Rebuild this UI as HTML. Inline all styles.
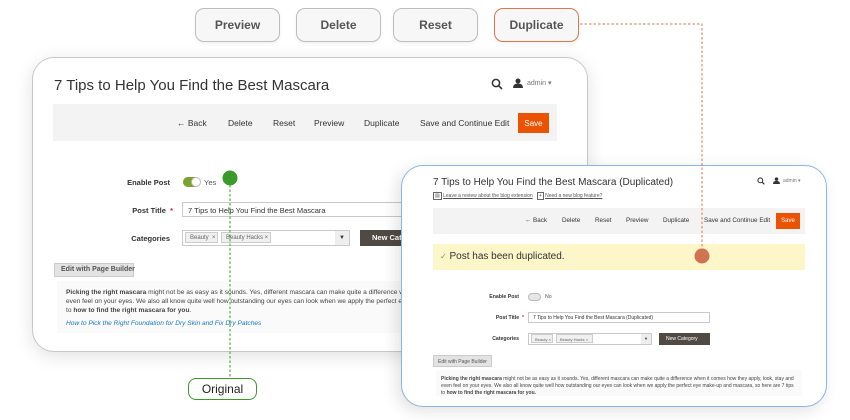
<!DOCTYPE html>
<html><head><meta charset="utf-8"><style>
*{box-sizing:border-box;margin:0;padding:0;white-space:nowrap}
body{width:850px;height:420px;background:#fff;position:relative;overflow:hidden;font-family:"Liberation Sans",sans-serif;color:#333}
.a{position:absolute}
.tb{position:absolute;height:34px;width:85px;border:1px solid #bdbdbd;border-radius:9px;background:#f7f7f7;font-size:12px;font-weight:bold;color:#555;display:flex;align-items:center;justify-content:center;box-shadow:0 2px 4px rgba(0,0,0,.06)}
.card{position:absolute;background:#fff;border-radius:22px}
.bar{position:absolute;background:#f3f3f3}
.lbl{position:absolute;font-weight:bold;color:#333;text-align:right}
.inp{position:absolute;border:1px solid #c9c9c9;background:#fff;color:#333;overflow:hidden}
.tag{position:absolute;border:1px solid #ccc;background:#f0f0f0;color:#666;overflow:hidden}
</style></head><body>

<div class="tb" style="left:195px;top:8px">Preview</div>
<div class="tb" style="left:296px;top:8px">Delete</div>
<div class="tb" style="left:393px;top:8px">Reset</div>
<div class="tb" style="left:494px;top:8px;border-color:#d9774f">Duplicate</div>

<!-- left card -->
<div class="card" style="left:32px;top:57px;width:556px;height:295px;border:1px solid #c8c8c8;box-shadow:0 4px 18px rgba(0,0,0,.12)"></div>
<div class="a" style="left:54px;top:77px;font-size:15px;color:#333">7 Tips to Help You Find the Best Mascara</div>
<svg class="a" style="left:491px;top:78px" width="12" height="12" viewBox="0 0 12 12"><circle cx="5" cy="5" r="3.6" fill="none" stroke="#333" stroke-width="1.5"/><path d="M7.6 7.6L11 11" stroke="#333" stroke-width="1.6"/></svg>
<svg class="a" style="left:513px;top:78px" width="10" height="10" viewBox="0 0 10 10"><circle cx="5" cy="3" r="2.5" fill="#333"/><path d="M0 10Q0 5.5 5 5.5Q10 5.5 10 10Z" fill="#333"/></svg>
<div class="a" style="left:527px;top:79px;font-size:7px;color:#777">admin ▾</div>
<div class="bar" style="left:53px;top:104px;width:504px;height:37px"></div>
<div class="a" style="left:177px;top:118px;font-size:8.5px">← Back</div>
<div class="a" style="left:228px;top:118px;font-size:8.5px">Delete</div>
<div class="a" style="left:273px;top:118px;font-size:8.5px">Reset</div>
<div class="a" style="left:314px;top:118px;font-size:8.5px">Preview</div>
<div class="a" style="left:364px;top:118px;font-size:8.5px">Duplicate</div>
<div class="a" style="left:420px;top:118px;font-size:8.5px">Save and Continue Edit</div>
<div class="a" style="left:518px;top:113px;width:31px;height:20px;background:#eb5202;color:#fff;font-size:8px;display:flex;align-items:center;justify-content:center">Save</div>

<div class="lbl" style="left:100px;top:178px;width:70px;font-size:7.5px">Enable Post</div>
<div class="a" style="left:183px;top:177px;width:17px;height:10px;border-radius:5px;background:#79a22e"></div>
<div class="a" style="left:191px;top:177px;width:10px;height:10px;border-radius:5px;background:#fff;border:1px solid #bbb"></div>
<div class="a" style="left:204px;top:178px;font-size:7.5px;color:#555">Yes</div>
<div class="lbl" style="left:100px;top:206px;width:73px;font-size:7.5px">Post Title <span style="color:#e22626">&nbsp;*</span></div>
<div class="inp" style="left:182px;top:202px;width:230px;height:15px;font-size:7.5px;padding:3px 5px">7 Tips to Help You Find the Best Mascara</div>
<div class="lbl" style="left:100px;top:234px;width:70px;font-size:7.5px">Categories</div>
<div class="inp" style="left:182px;top:230px;width:168px;height:16px"></div>
<div class="tag" style="left:185px;top:232px;width:33px;height:11px;font-size:6px;padding:2px 4px">Beauty &nbsp;×</div>
<div class="tag" style="left:221px;top:232px;width:50px;height:11px;font-size:6px;padding:2px 4px">Beauty Hacks ×</div>
<div class="a" style="left:335px;top:231px;width:14px;height:14px;background:#eee;font-size:6px;text-align:center;line-height:14px">▼</div>
<div class="a" style="left:360px;top:230px;width:60px;height:16px;background:#514943;color:#fff;font-size:7.5px;font-weight:bold;padding:3px 12px">New Category</div>
<div class="a" style="left:54px;top:263px;width:80px;height:14px;background:#e3e3e3;border:1px solid #ccc;font-size:7px;font-weight:bold;color:#555;padding:2px 6px">Edit with Page Builder</div>
<div class="a" style="left:57px;top:281px;width:350px;height:52px;background:#fafafa"></div>
<div class="a" style="left:66px;top:288px;width:340px;font-size:6.6px;line-height:9px;color:#444;overflow:hidden"><b>Picking the right mascara</b> might not be as easy as it sounds. Yes, different mascara can make quite a difference when<br>even feel on your eyes. We also all know quite well how outstanding our eyes can look when we apply the perfect eye<br>to <b>how to find the right mascara for you</b>.</div>
<div class="a" style="left:66px;top:320px;font-size:6.6px;font-style:italic;color:#1979c3">How to Pick the Right Foundation for Dry Skin and Fix Dry Patches</div>

<!-- right card -->
<div class="card" style="left:401px;top:165px;width:426px;height:242px;border:1px solid #8db4e6;box-shadow:-4px 4px 16px rgba(0,0,0,.12)"></div>
<div class="a" style="left:433px;top:177px;font-size:10px;color:#333">7 Tips to Help You Find the Best Mascara (Duplicated)</div>
<div class="a" style="left:433px;top:193px;font-size:5px;color:#555"><span style="border:1px solid #666;padding:0 1px">▤</span> <u>Leave a review about the blog extension</u> &nbsp;&nbsp;<span style="border:1px solid #666;padding:0 1px">+</span> <u>Need a new blog feature?</u></div>
<svg class="a" style="left:757px;top:177px" width="8" height="8" viewBox="0 0 12 12"><circle cx="5" cy="5" r="3.6" fill="none" stroke="#333" stroke-width="1.6"/><path d="M7.6 7.6L11 11" stroke="#333" stroke-width="1.8"/></svg>
<svg class="a" style="left:773px;top:177px" width="7" height="7" viewBox="0 0 10 10"><circle cx="5" cy="3" r="2.5" fill="#333"/><path d="M0 10Q0 5.5 5 5.5Q10 5.5 10 10Z" fill="#333"/></svg>
<div class="a" style="left:783px;top:178px;font-size:5px;color:#777">admin ▾</div>
<div class="bar" style="left:433px;top:208px;width:372px;height:26px"></div>
<div class="a" style="left:525px;top:217px;font-size:6.3px">← Back</div>
<div class="a" style="left:562px;top:217px;font-size:6.3px">Delete</div>
<div class="a" style="left:595px;top:217px;font-size:6.3px">Reset</div>
<div class="a" style="left:626px;top:217px;font-size:6.3px">Preview</div>
<div class="a" style="left:663px;top:217px;font-size:6.3px">Duplicate</div>
<div class="a" style="left:704px;top:217px;font-size:6.3px">Save and Continue Edit</div>
<div class="a" style="left:776px;top:213px;width:24px;height:16px;background:#eb5202;color:#fff;font-size:6px;display:flex;align-items:center;justify-content:center">Save</div>
<div class="a" style="left:433px;top:244px;width:372px;height:26px;background:#fcf6c9"></div>
<div class="a" style="left:440px;top:251px;font-size:10px;color:#333"><span style="color:#79a22e;font-size:8px">✓</span> Post has been duplicated.</div>
<div class="lbl" style="left:470px;top:294px;width:49px;font-size:5.2px">Enable Post</div>
<div class="a" style="left:528px;top:293px;width:13px;height:8px;border-radius:4px;background:#e6e6e6;border:1px solid #bbb"></div>
<div class="a" style="left:545px;top:294px;font-size:5.2px;color:#555">No</div>
<div class="lbl" style="left:470px;top:315px;width:54px;font-size:5.2px">Post Title <span style="color:#e22626">&nbsp;*</span></div>
<div class="inp" style="left:528px;top:312px;width:182px;height:11px;font-size:5px;padding:2px 4px">7 Tips to Help You Find the Best Mascara (Duplicated)</div>
<div class="lbl" style="left:470px;top:336px;width:49px;font-size:5.2px">Categories</div>
<div class="inp" style="left:528px;top:333px;width:124px;height:12px"></div>
<div class="tag" style="left:531px;top:334px;width:22px;height:9px;font-size:4px;padding:2px 3px">Beauty ×</div>
<div class="tag" style="left:556px;top:334px;width:37px;height:9px;font-size:4px;padding:2px 3px">Beauty Hacks ×</div>
<div class="a" style="left:641px;top:334px;width:10px;height:10px;background:#eee;font-size:4px;text-align:center;line-height:10px">▼</div>
<div class="a" style="left:659px;top:333px;width:51px;height:12px;background:#514943;color:#fff;font-size:5px;padding:3px 7px">New Category</div>
<div class="a" style="left:433px;top:355px;width:59px;height:12px;background:#e3e3e3;border:1px solid #ccc;font-size:5px;color:#555;padding:3px 4px">Edit with Page Builder</div>
<div class="a" style="left:436px;top:370px;width:366px;height:26px;background:#fafafa"></div>
<div class="a" style="left:441px;top:376px;width:360px;font-size:5px;line-height:7px;color:#444;overflow:hidden"><b>Picking the right mascara</b> might not be as easy as it sounds. Yes, different mascara can make quite a difference when it comes how they apply, look, stay and<br>even feel on your eyes. We also all know quite well how outstanding our eyes can look when we apply the perfect eye make-up and mascara, so here are 7 tips<br>to <b>how to find the right mascara for you.</b></div>

<svg class="a" style="left:0;top:0" width="850" height="420">
<path d="M580 24H702V256" fill="none" stroke="#d9774f" stroke-width="1" stroke-dasharray="2.5 2"/>
<circle cx="702" cy="256" r="7.5" fill="#d07350"/>
<path d="M230 185V378" fill="none" stroke="#3a9a2a" stroke-width="1" stroke-dasharray="2.5 2"/>
<circle cx="230" cy="178" r="7.5" fill="#3a9a2a"/>
</svg>
<div class="a" style="left:188px;top:378px;width:69px;height:22px;border:1px solid #3a9a2a;border-radius:8px;background:#fff;font-size:12px;color:#222;display:flex;align-items:center;justify-content:center">Original</div>
</body></html>
